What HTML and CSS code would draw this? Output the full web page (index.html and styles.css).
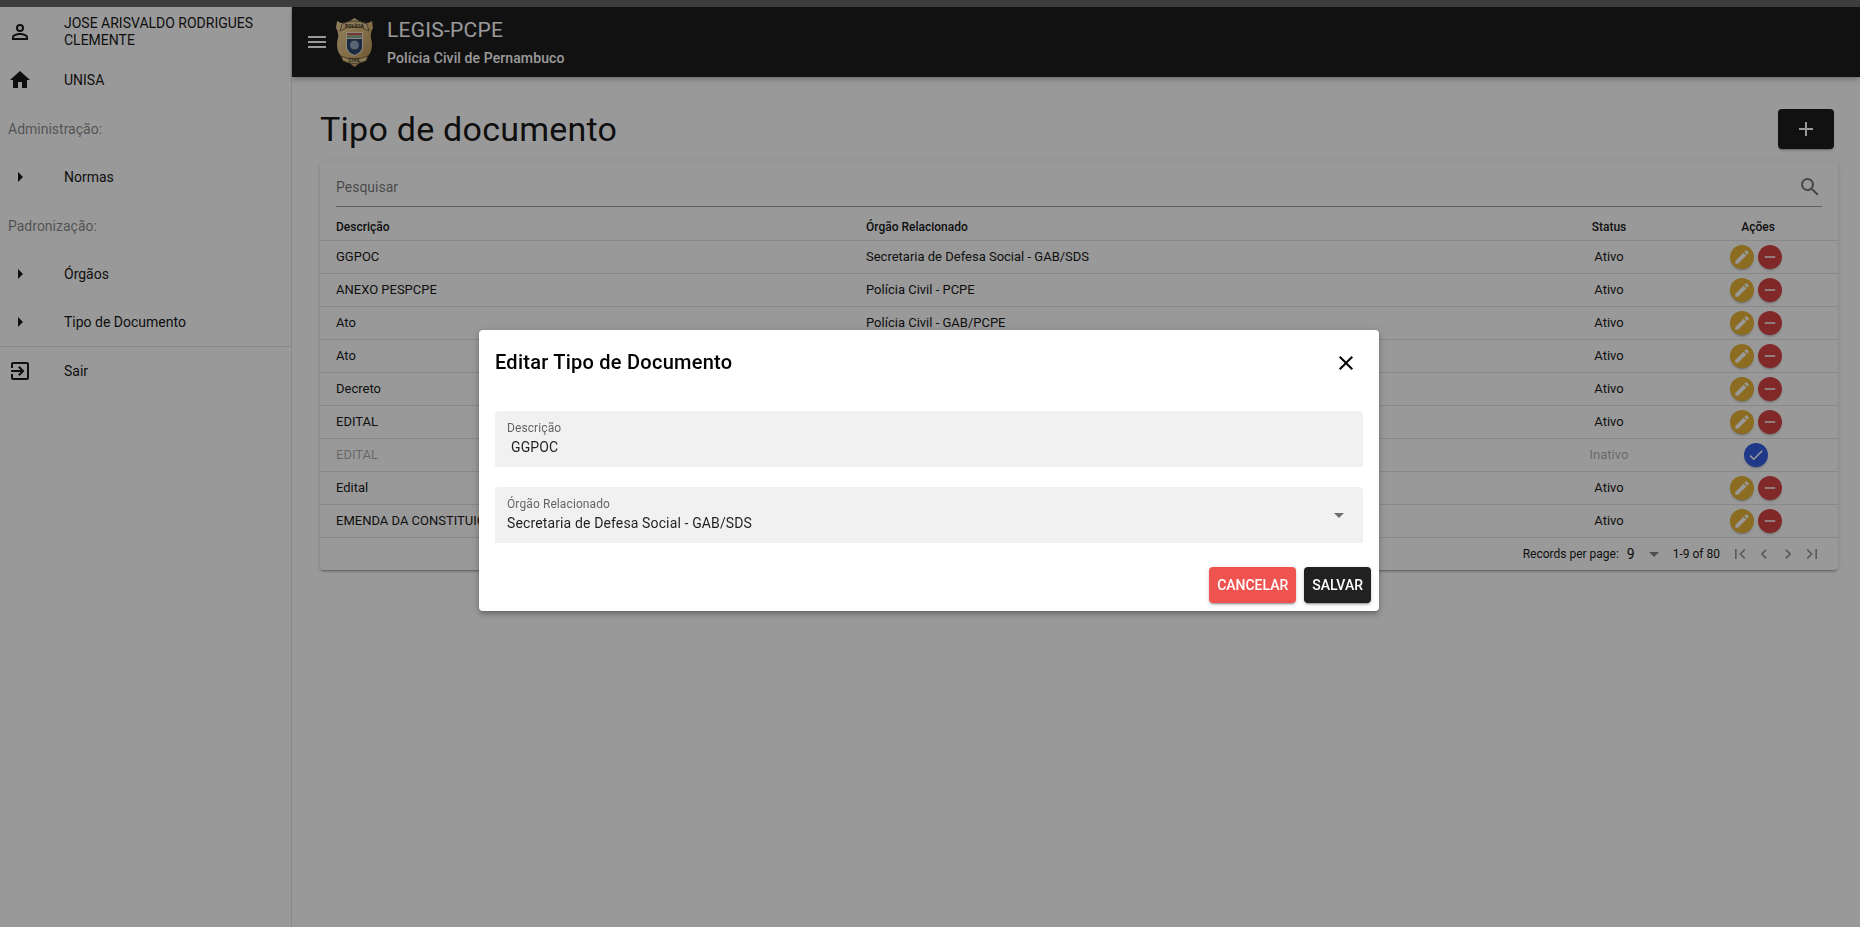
FILE: index.html
```html
<!DOCTYPE html>
<html lang="pt-BR">
<head>
    <meta charset="UTF-8">
    <title>LEGIS-PCPE</title>
    <link rel="stylesheet" href="styles.css">
</head>
<body>
    <!-- Icon sprite -->
    <svg class="sprite" xmlns="http://www.w3.org/2000/svg">
        <symbol id="i-account" viewBox="0 0 24 24"><path d="M12,4A4,4 0 0,1 16,8A4,4 0 0,1 12,12A4,4 0 0,1 8,8A4,4 0 0,1 12,4M12,6A2,2 0 0,0 10,8A2,2 0 0,0 12,10A2,2 0 0,0 14,8A2,2 0 0,0 12,6M12,13C14.67,13 20,14.33 20,17V20H4V17C4,14.33 9.33,13 12,13M12,14.9C9.03,14.9 5.9,16.36 5.9,17V18.1H18.1V17C18.1,16.36 14.97,14.9 12,14.9Z"/></symbol>
        <symbol id="i-home" viewBox="0 0 24 24"><path d="M10,20V14H14V20H19V12H22L12,3L2,12H5V20H10Z"/></symbol>
        <symbol id="i-right" viewBox="0 0 24 24"><path d="M10,17L15,12L10,7V17Z"/></symbol>
        <symbol id="i-exit" viewBox="0 0 24 24"><path d="M19,3H5C3.89,3 3,3.89 3,5V9H5V5H19V19H5V15H3V19A2,2 0 0,0 5,21H19A2,2 0 0,0 21,19V5C21,3.89 20.1,3 19,3M10.08,15.58L11.5,17L16.5,12L11.5,7L10.08,8.41L12.67,11H3V13H12.67L10.08,15.58Z"/></symbol>
        <symbol id="i-menu" viewBox="0 0 24 24"><path d="M3,6H21V8H3V6M3,11H21V13H3V11M3,16H21V18H3V16Z"/></symbol>
        <symbol id="i-plus" viewBox="0 0 24 24"><path d="M19,13H13V19H11V13H5V11H11V5H13V11H19V13Z"/></symbol>
        <symbol id="i-search" viewBox="0 0 24 24"><path d="M9.5,3A6.5,6.5 0 0,1 16,9.5C16,11.11 15.41,12.59 14.44,13.73L14.71,14H15.5L20.5,19L19,20.5L14,15.5V14.71L13.73,14.44C12.59,15.41 11.11,16 9.5,16A6.5,6.5 0 0,1 3,9.5A6.5,6.5 0 0,1 9.5,3M9.5,5C7,5 5,7 5,9.5C5,12 7,14 9.5,14C12,14 14,12 14,9.5C14,7 12,5 9.5,5Z"/></symbol>
        <symbol id="i-pencil" viewBox="0 0 24 24"><path d="M20.71,7.04C21.1,6.65 21.1,6 20.71,5.63L18.37,3.29C18,2.9 17.35,2.9 16.96,3.29L15.12,5.12L18.87,8.87M3,17.25V21H6.75L17.81,9.93L14.06,6.18L3,17.25Z"/></symbol>
        <symbol id="i-minus" viewBox="0 0 24 24"><path d="M19,13H5V11H19V13Z"/></symbol>
        <symbol id="i-check" viewBox="0 0 24 24"><path d="M21,7L9,19L3.5,13.5L4.91,12.09L9,16.17L19.59,5.59L21,7Z"/></symbol>
        <symbol id="i-close" viewBox="0 0 24 24"><path d="M19,6.41L17.59,5L12,10.59L6.41,5L5,6.41L10.59,12L5,17.59L6.41,19L12,13.41L17.59,19L19,17.59L13.41,12L19,6.41Z"/></symbol>
        <symbol id="i-down" viewBox="0 0 24 24"><path d="M7,10L12,15L17,10H7Z"/></symbol>
        <symbol id="i-first" viewBox="0 0 24 24"><path d="M18.41,16.59L13.82,12L18.41,7.41L17,6L11,12L17,18L18.41,16.59M6,6H8V18H6V6Z"/></symbol>
        <symbol id="i-prev" viewBox="0 0 24 24"><path d="M15.41,16.58L10.83,12L15.41,7.41L14,6L8,12L14,18L15.41,16.58Z"/></symbol>
        <symbol id="i-next" viewBox="0 0 24 24"><path d="M8.59,16.58L13.17,12L8.59,7.41L10,6L16,12L10,18L8.59,16.58Z"/></symbol>
        <symbol id="i-last" viewBox="0 0 24 24"><path d="M5.59,7.41L10.18,12L5.59,16.59L7,18L13,12L7,6L5.59,7.41M16,6H18V18H16V6Z"/></symbol>
    </svg>

    <div class="top-strip"></div>

    <div class="app">
        <!-- Side menu -->
        <nav class="sidebar">
            <div class="nav-item nav-user">
                <svg class="nav-icon"><use href="#i-account"/></svg>
                <span>JOSE ARISVALDO RODRIGUES CLEMENTE</span>
            </div>
            <div class="nav-item">
                <svg class="nav-icon"><use href="#i-home"/></svg>
                <span>UNISA</span>
            </div>
            <div class="nav-label">Administração:</div>
            <div class="nav-item">
                <svg class="nav-icon nav-caret"><use href="#i-right"/></svg>
                <span>Normas</span>
            </div>
            <div class="nav-label">Padronização:</div>
            <div class="nav-item">
                <svg class="nav-icon nav-caret"><use href="#i-right"/></svg>
                <span>Órgãos</span>
            </div>
            <div class="nav-item">
                <svg class="nav-icon nav-caret"><use href="#i-right"/></svg>
                <span>Tipo de Documento</span>
            </div>
            <hr class="nav-divider">
            <div class="nav-item">
                <svg class="nav-icon"><use href="#i-exit"/></svg>
                <span>Sair</span>
            </div>
        </nav>

        <div class="main">
            <!-- App bar -->
            <header class="appbar">
                <svg class="menu-icon"><use href="#i-menu"/></svg>
                <svg class="badge" viewBox="0 0 37 49" xmlns="http://www.w3.org/2000/svg">
                    <defs>
                        <linearGradient id="gold" x1="0" y1="0" x2="1" y2="1">
                            <stop offset="0" stop-color="#f0d296"/>
                            <stop offset="0.55" stop-color="#d8ae68"/>
                            <stop offset="1" stop-color="#a27f3e"/>
                        </linearGradient>
                    </defs>
                    <!-- Shield -->
                    <path d="M5,5 Q12,5 18.5,0 Q25,5 32,5 L36,3 L37,10 Q34,14 35,20 Q38,31 32,38 Q26,43 18.5,49 Q11,43 5,38 Q-1,31 2,20 Q3,14 0,10 L1,3 Z" fill="url(#gold)"/>
                    <!-- Top scroll -->
                    <path d="M4,13 Q18,4 33,13 L31,6 Q18,0 6,6 Z" fill="#e3c486" stroke="#4a3a1c" stroke-width="0.8"/>
                    <text class="badge-text" x="18.5" y="9.8" text-anchor="middle">POLÍCIA</text>
                    <!-- Flag and crest -->
                    <path d="M10,14 H27 V29 Q27,35 18.5,38 Q10,35 10,29 Z" fill="#e9e2d0"/>
                    <path d="M11,15 H26 V17.5 H11 Z" fill="#b9503c"/>
                    <path d="M11,17.5 H26 V20 H11 Z" fill="#7ba884"/>
                    <path d="M11,21 H26 V29 Q26,34 18.5,37 Q11,34 11,29 Z" fill="#17325c"/>
                    <circle cx="18.5" cy="27" r="4.5" fill="#8fa0b8"/>
                    <!-- Bottom scroll -->
                    <path d="M5,38 Q18,44 32,38 L30,43 Q18,48 7,43 Z" fill="#e3c486" stroke="#4a3a1c" stroke-width="0.8"/>
                    <text class="badge-text" x="18.5" y="44" text-anchor="middle">CIVIL</text>
                </svg>
                <div class="brand">
                    <div class="brand-title">LEGIS-PCPE</div>
                    <div class="brand-sub">Polícia Civil de Pernambuco</div>
                </div>
            </header>

            <main class="content">
                <div class="page-head">
                    <h1>Tipo de documento</h1>
                    <button class="btn-add"><svg><use href="#i-plus"/></svg></button>
                </div>

                <section class="card">
                    <div class="search">
                        <span>Pesquisar</span>
                        <svg><use href="#i-search"/></svg>
                    </div>
                    <table class="grid">
                        <thead>
                            <tr>
                                <th class="col-desc">Descrição</th>
                                <th class="col-org">Órgão Relacionado</th>
                                <th class="col-status">Status</th>
                                <th class="col-actions">Ações</th>
                            </tr>
                        </thead>
                        <tbody>
                            <tr>
                                <td>GGPOC</td>
                                <td>Secretaria de Defesa Social - GAB/SDS</td>
                                <td class="center">Ativo</td>
                                <td class="center"><div class="actions"><span class="act act-edit"><svg><use href="#i-pencil"/></svg></span><span class="act act-del"><svg><use href="#i-minus"/></svg></span></div></td>
                            </tr>
                            <tr>
                                <td>ANEXO PESPCPE</td>
                                <td>Polícia Civil - PCPE</td>
                                <td class="center">Ativo</td>
                                <td class="center"><div class="actions"><span class="act act-edit"><svg><use href="#i-pencil"/></svg></span><span class="act act-del"><svg><use href="#i-minus"/></svg></span></div></td>
                            </tr>
                            <tr>
                                <td>Ato</td>
                                <td>Polícia Civil - GAB/PCPE</td>
                                <td class="center">Ativo</td>
                                <td class="center"><div class="actions"><span class="act act-edit"><svg><use href="#i-pencil"/></svg></span><span class="act act-del"><svg><use href="#i-minus"/></svg></span></div></td>
                            </tr>
                            <tr>
                                <td>Ato</td>
                                <td>Polícia Civil - PCPE</td>
                                <td class="center">Ativo</td>
                                <td class="center"><div class="actions"><span class="act act-edit"><svg><use href="#i-pencil"/></svg></span><span class="act act-del"><svg><use href="#i-minus"/></svg></span></div></td>
                            </tr>
                            <tr>
                                <td>Decreto</td>
                                <td>Polícia Civil - PCPE</td>
                                <td class="center">Ativo</td>
                                <td class="center"><div class="actions"><span class="act act-edit"><svg><use href="#i-pencil"/></svg></span><span class="act act-del"><svg><use href="#i-minus"/></svg></span></div></td>
                            </tr>
                            <tr>
                                <td>EDITAL</td>
                                <td>Polícia Civil - PCPE</td>
                                <td class="center">Ativo</td>
                                <td class="center"><div class="actions"><span class="act act-edit"><svg><use href="#i-pencil"/></svg></span><span class="act act-del"><svg><use href="#i-minus"/></svg></span></div></td>
                            </tr>
                            <tr class="inactive">
                                <td>EDITAL</td>
                                <td>Polícia Civil - PCPE</td>
                                <td class="center">Inativo</td>
                                <td class="center"><div class="actions"><span class="act act-on"><svg><use href="#i-check"/></svg></span></div></td>
                            </tr>
                            <tr>
                                <td>Edital</td>
                                <td>Polícia Civil - PCPE</td>
                                <td class="center">Ativo</td>
                                <td class="center"><div class="actions"><span class="act act-edit"><svg><use href="#i-pencil"/></svg></span><span class="act act-del"><svg><use href="#i-minus"/></svg></span></div></td>
                            </tr>
                            <tr>
                                <td>EMENDA DA CONSTITUIÇÃO</td>
                                <td>Polícia Civil - PCPE</td>
                                <td class="center">Ativo</td>
                                <td class="center"><div class="actions"><span class="act act-edit"><svg><use href="#i-pencil"/></svg></span><span class="act act-del"><svg><use href="#i-minus"/></svg></span></div></td>
                            </tr>
                        </tbody>
                    </table>
                    <div class="pager">
                        <span class="pager-label">Records per page:</span>
                        <span class="pager-size">9</span>
                        <svg class="pager-arrow"><use href="#i-down"/></svg>
                        <span class="pager-range">1-9 of 80</span>
                        <svg class="pager-btn"><use href="#i-first"/></svg>
                        <svg class="pager-btn"><use href="#i-prev"/></svg>
                        <svg class="pager-btn"><use href="#i-next"/></svg>
                        <svg class="pager-btn"><use href="#i-last"/></svg>
                    </div>
                </section>
            </main>
        </div>
    </div>

    <!-- Modal -->
    <div class="overlay">
        <div class="dialog">
            <div class="dialog-head">
                <h2>Editar Tipo de Documento</h2>
                <svg class="dialog-close"><use href="#i-close"/></svg>
            </div>
            <div class="dialog-body">
                <div class="field">
                    <label>Descrição</label>
                    <div class="field-value field-value-text">GGPOC</div>
                </div>
                <div class="field">
                    <label>Órgão Relacionado</label>
                    <div class="field-value">Secretaria de Defesa Social - GAB/SDS</div>
                    <svg class="field-arrow"><use href="#i-down"/></svg>
                </div>
            </div>
            <div class="dialog-foot">
                <button class="btn btn-cancel">Cancelar</button>
                <button class="btn btn-save">Salvar</button>
            </div>
        </div>
    </div>
</body>
</html>
```

FILE: styles.css
```css
/* General */
* {
    box-sizing: border-box;
}

body {
    margin: 0;
    height: 927px;
    overflow: hidden;
    background-color: #fff;
    color: rgba(0, 0, 0, 0.87);
    font-family: Roboto, "Liberation Sans", sans-serif;
    font-size: 14px;
    display: flex;
    flex-direction: column;
}

.sprite {
    display: none;
}

svg {
    fill: currentColor;
}

.top-strip {
    height: 7px;
    flex: none;
    background-color: #555;
}

.app {
    flex: 1;
    display: flex;
    min-height: 0;
}

/* Sidebar */
.sidebar {
    width: 292px;
    flex: none;
    background-color: #fff;
    border-right: 1px solid rgba(0, 0, 0, 0.12);
}

.nav-item {
    height: 48px;
    display: flex;
    align-items: center;
    color: #000;
    line-height: 20px;
}

.nav-user {
    height: 49px;
    padding-right: 24px;
    line-height: 17px;
}

.nav-icon {
    width: 24px;
    height: 24px;
    flex: none;
    margin: 0 32px 0 8px;
}

.nav-label {
    height: 49px;
    padding-left: 8px;
    display: flex;
    align-items: center;
    color: rgba(0, 0, 0, 0.54);
}

.nav-divider {
    margin: 0;
    border: 0;
    border-top: 1px solid rgba(0, 0, 0, 0.12);
}

/* App bar */
.main {
    flex: 1;
    min-width: 0;
    display: flex;
    flex-direction: column;
}

.appbar {
    height: 70px;
    flex: none;
    background-color: #050505;
    color: #fff;
    display: flex;
    align-items: center;
    padding-left: 13px;
    box-shadow: 0 2px 4px -1px rgba(0, 0, 0, 0.2), 0 4px 5px rgba(0, 0, 0, 0.14);
}

.menu-icon {
    width: 24px;
    height: 24px;
    flex: none;
}

.badge {
    width: 37px;
    height: 49px;
    flex: none;
    margin-left: 7px;
}

.badge-text {
    font-size: 5px;
    font-weight: 700;
    fill: #1d1608;
}

.brand {
    margin-left: 14px;
}

.brand-title {
    font-size: 21px;
    letter-spacing: 0.0125em;
    line-height: 28px;
    margin-bottom: 4px;
}

.brand-sub {
    font-weight: 500;
    letter-spacing: 0.0071em;
    line-height: 20px;
}

/* Page */
.content {
    padding: 32px 22px 0 28px;
}

.page-head {
    display: flex;
    justify-content: space-between;
    align-items: center;
    height: 40px;
    margin-bottom: 12px;
}

.page-head h1 {
    margin: 0;
    font-size: 34px;
    font-weight: 400;
    letter-spacing: 0.0073em;
    color: #000;
}

.btn-add {
    width: 56px;
    height: 40px;
    margin-right: 4px;
    border: 0;
    border-radius: 4px;
    background-color: #050505;
    color: #fff;
    display: flex;
    align-items: center;
    justify-content: center;
    padding: 0;
    box-shadow: 0 3px 1px -2px rgba(0, 0, 0, 0.2), 0 2px 2px rgba(0, 0, 0, 0.14);
}

.btn-add svg {
    width: 24px;
    height: 24px;
}

/* Table card */
.card {
    background-color: #fff;
    border-radius: 4px;
    box-shadow: 0 3px 1px -2px rgba(0, 0, 0, 0.2), 0 2px 2px rgba(0, 0, 0, 0.14), 0 1px 5px rgba(0, 0, 0, 0.12);
}

.search {
    height: 46px;
    margin: 0 16px;
    padding-top: 6px;
    display: flex;
    align-items: center;
    justify-content: space-between;
    color: rgba(0, 0, 0, 0.6);
    border-bottom: 1px solid rgba(0, 0, 0, 0.42);
}

.search svg {
    width: 24px;
    height: 24px;
}

.grid {
    width: 100%;
    border-collapse: separate;
    border-spacing: 0;
    table-layout: fixed;
    font-size: 13px;
    color: #000;
}

.grid th,
.grid td {
    height: 33px;
    padding: 0 16px;
    border-bottom: 1px solid rgba(0, 0, 0, 0.12);
    white-space: nowrap;
    overflow: hidden;
}

.grid td {
    padding-bottom: 2px;
}

.grid td:last-child {
    padding-bottom: 0;
}

.grid th {
    height: 34px;
    padding-top: 7px;
    font-size: 12px;
    font-weight: 500;
    text-align: left;
}

.col-desc {
    width: 530px;
}

.col-org {
    width: 690px;
}

.col-status {
    width: 138px;
}

.col-actions {
    width: 160px;
}

.grid .col-status,
.grid .col-actions,
.center {
    text-align: center;
}

.grid .inactive td {
    color: rgba(0, 0, 0, 0.38);
}

.actions {
    display: flex;
    justify-content: center;
    gap: 4px;
    padding-right: 4px;
}

.act {
    width: 24px;
    height: 24px;
    border-radius: 50%;
    display: flex;
    align-items: center;
    justify-content: center;
    color: #fff;
    box-shadow: 0 3px 1px -2px rgba(0, 0, 0, 0.2), 0 2px 2px rgba(0, 0, 0, 0.14);
}

.act svg {
    width: 18px;
    height: 18px;
}

.act-edit {
    background-color: #e6ac20;
}

.act-del {
    background-color: #d32f2f;
}

.act-on {
    background-color: #1e4fe0;
}

/* Pagination */
.pager {
    height: 32px;
    display: flex;
    align-items: center;
    justify-content: flex-end;
    padding-right: 14px;
    font-size: 12px;
    color: #000;
}

.pager-size {
    font-size: 14px;
    margin-left: 8px;
}

.pager-arrow {
    width: 24px;
    height: 24px;
    margin-left: 7px;
    color: rgba(0, 0, 0, 0.54);
}

.pager-range {
    margin: 0 8px 0 7px;
}

.pager-btn {
    width: 20px;
    height: 20px;
    margin: 0 2px;
    color: rgba(0, 0, 0, 0.45);
}

/* Modal */
.overlay {
    position: fixed;
    inset: 0;
    padding: 14px 2px 0 0;
    background-color: rgba(33, 33, 33, 0.46);
    display: flex;
    align-items: center;
    justify-content: center;
}

.dialog {
    width: 900px;
    height: 281px;
    background-color: #fff;
    border-radius: 4px;
    box-shadow: 0 2px 4px -1px rgba(0, 0, 0, 0.2), 0 4px 5px rgba(0, 0, 0, 0.14), 0 1px 10px rgba(0, 0, 0, 0.12);
    display: flex;
    flex-direction: column;
}

.dialog-head {
    height: 81px;
    padding: 0 21px 17px 16px;
    display: flex;
    align-items: center;
    justify-content: space-between;
}

.dialog-head h2 {
    margin: 0;
    font-size: 20px;
    font-weight: 500;
    letter-spacing: 0.0125em;
    color: #000;
}

.dialog-close {
    width: 24px;
    height: 24px;
    margin-top: 1px;
    color: #000;
}

.dialog-body {
    padding: 0 16px;
    display: flex;
    flex-direction: column;
    gap: 20px;
}

.field {
    position: relative;
    height: 56px;
    padding: 9px 12px 0;
    background-color: #f1f1f1;
    border-radius: 4px 4px 0 0;
}

.field label {
    display: block;
    font-size: 12px;
    letter-spacing: 0.1px;
    line-height: 16px;
    color: rgba(0, 0, 0, 0.6);
}

.field-value {
    margin-top: 1px;
    line-height: 20px;
    letter-spacing: 0.13px;
    color: rgba(0, 0, 0, 0.87);
}

.field-value-text {
    padding-left: 4px;
}

.field-arrow {
    position: absolute;
    top: 16px;
    right: 12px;
    width: 24px;
    height: 24px;
    color: rgba(0, 0, 0, 0.54);
}

.dialog-foot {
    margin-top: 24px;
    padding: 0 8px;
    display: flex;
    justify-content: flex-end;
    gap: 8px;
}

.btn {
    height: 36px;
    padding: 0 8px;
    border: 0;
    border-radius: 4px;
    font-family: inherit;
    font-size: 14px;
    font-weight: 500;
    text-transform: uppercase;
    color: #fff;
    box-shadow: 0 3px 1px -2px rgba(0, 0, 0, 0.2), 0 2px 2px rgba(0, 0, 0, 0.14), 0 1px 5px rgba(0, 0, 0, 0.12);
}

.btn-cancel {
    background-color: #ef5350;
}

.btn-save {
    background-color: #212121;
}
```
